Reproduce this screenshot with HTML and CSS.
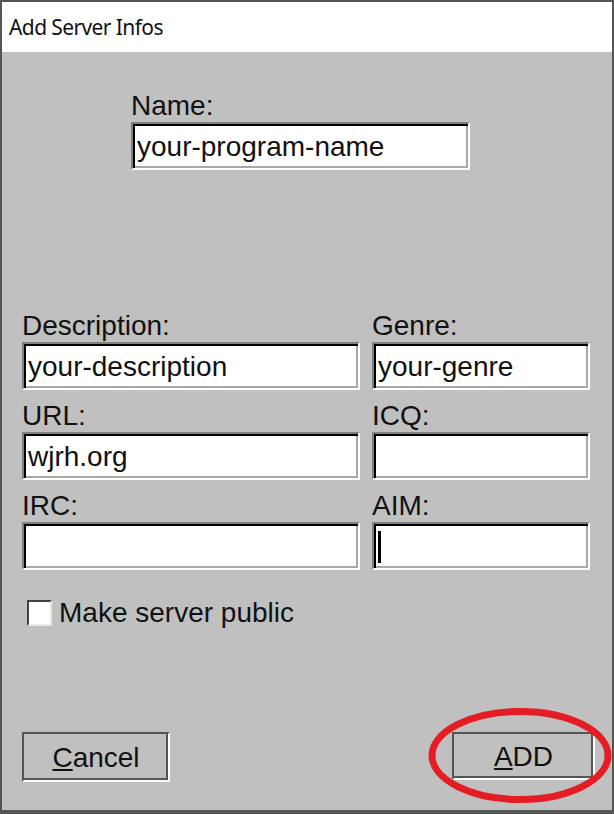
FILE: index.html
```html
<!DOCTYPE html>
<html>
<head>
<meta charset="utf-8">
<title>Add Server Infos</title>
<link rel="stylesheet" href="styles.css">
</head>
<body>
<div class="window">
  <div class="titlebar">Add Server Infos</div>
  <div class="content">
    <div class="field name-field">
      <div class="label">Name:</div>
      <div class="box">your-program-name</div>
    </div>
    <div class="grid">
      <div class="field">
        <div class="label">Description:</div>
        <div class="box">your-description</div>
      </div>
      <div class="field">
        <div class="label">Genre:</div>
        <div class="box">your-genre</div>
      </div>
      <div class="field">
        <div class="label">URL:</div>
        <div class="box">wjrh.org</div>
      </div>
      <div class="field">
        <div class="label">ICQ:</div>
        <div class="box"></div>
      </div>
      <div class="field">
        <div class="label">IRC:</div>
        <div class="box"></div>
      </div>
      <div class="field">
        <div class="label">AIM:</div>
        <div class="box"><span class="caret"></span></div>
      </div>
    </div>
    <div class="check">
      <span class="checkbox"></span>
      <span>Make server public</span>
    </div>
    <div class="buttons">
      <div class="btn btn-cancel"><u>C</u>ancel</div>
      <div class="btn btn-add"><u>A</u>DD</div>
    </div>
  </div>
  <svg class="highlight" width="614" height="814" viewBox="0 0 614 814">
    <ellipse cx="520" cy="755.5" rx="88" ry="44" fill="none" stroke="#e41d24" stroke-width="7"/>
  </svg>
</div>
</body>
</html>
```
FILE: styles.css
```css
html, body {
  margin: 0;
  padding: 0;
}

body {
  width: 614px;
  height: 814px;
  overflow: hidden;
  background: #c0c0c0;
}

.window {
  position: relative;
  box-sizing: border-box;
  width: 614px;
  height: 814px;
  border: 2px solid #555;
  border-bottom-width: 4px;
  background: #c0c0c0;
  display: flex;
  flex-direction: column;
  font-family: "Liberation Sans", Arial, sans-serif;
  color: #111;
}

.titlebar {
  height: 50px;
  flex: none;
  background: #fff;
  padding-left: 7px;
  display: flex;
  align-items: center;
  font-family: "Noto Sans", sans-serif;
  font-size: 21px;
  letter-spacing: -0.6px;
  color: #111;
}

.content {
  flex: 1;
  display: flex;
  flex-direction: column;
  padding: 0 22px 28px 20px;
}

.label {
  font-size: 28px;
  line-height: 30px;
  margin-bottom: 1px;
  white-space: nowrap;
}

.box {
  box-sizing: border-box;
  height: 48px;
  background: #fff;
  border: 2px solid;
  border-color: #808080 #fff #fff #808080;
  box-shadow: inset 2px 2px 0 #000, inset -2px -2px 0 #a8a8a8;
  padding: 2px 0 0 4px;
  display: flex;
  align-items: center;
  font-size: 28px;
  white-space: nowrap;
  overflow: hidden;
}

.name-field {
  margin-top: 39px;
  margin-left: 109px;
  width: 339px;
}

.grid {
  margin-top: 141px;
  display: grid;
  grid-template-columns: 338px 218px;
  column-gap: 12px;
  row-gap: 11px;
}

.caret {
  display: block;
  width: 3px;
  height: 32px;
  background: #000;
}

.check {
  margin-top: 28px;
  margin-left: 5px;
  display: flex;
  align-items: center;
  gap: 7px;
  font-size: 28px;
  line-height: 30px;
}

.checkbox {
  box-sizing: border-box;
  width: 25px;
  height: 26px;
  background: #fff;
  border: 2px solid;
  border-color: #404040 #e8e8e8 #e8e8e8 #404040;
}

.buttons {
  margin-top: auto;
  margin-right: -5px;
  display: flex;
  justify-content: space-between;
  align-items: flex-start;
}

.btn {
  box-sizing: border-box;
  display: flex;
  align-items: center;
  justify-content: center;
  font-size: 28px;
  border: 2px solid;
  border-color: #555 #fff #fff #555;
  box-shadow: inset -2px -2px 0 #555;
  padding-top: 2px;
}

.btn-cancel {
  width: 148px;
  height: 50px;
}

.btn-add {
  width: 143px;
  height: 48px;
}

.highlight {
  position: absolute;
  left: -2px;
  top: -2px;
  pointer-events: none;
}
```
